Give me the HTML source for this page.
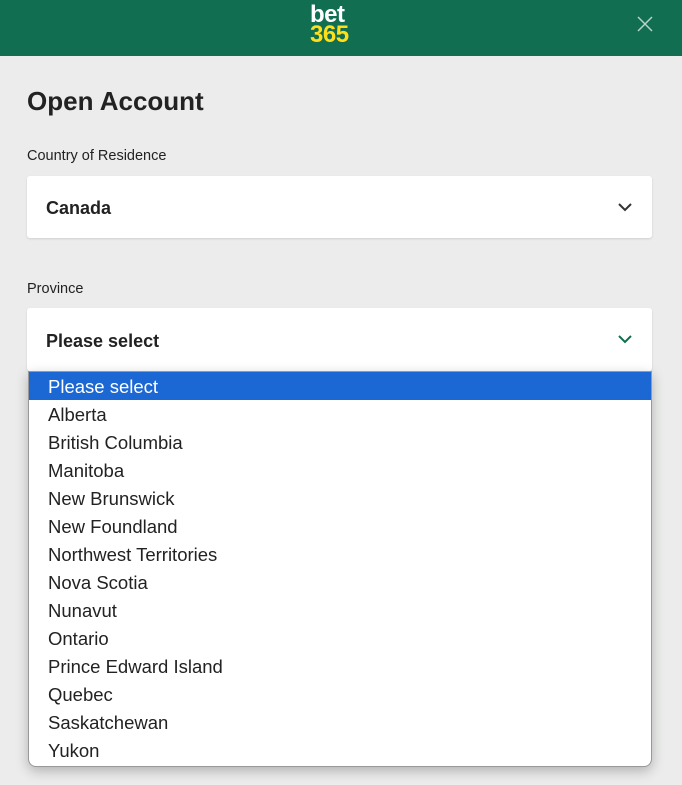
<!DOCTYPE html>
<html><head><style>
body{margin:0;width:682px;height:785px;background:#ebeceb;font-family:"Liberation Sans",sans-serif;position:relative;overflow:hidden}
.hdr{position:absolute;left:0;top:0;width:682px;height:56px;background:#126e51}
.logo{position:absolute;left:310px;top:5px;font-weight:bold;font-size:24px;line-height:20px;letter-spacing:-0.5px}
.t{position:absolute;color:#222}
.box{position:absolute;left:27px;width:625px;background:#fff;border-radius:3px;box-shadow:0 1px 2px rgba(0,0,0,.12)}
.box span{position:absolute;left:19px;font-weight:bold;font-size:18px;color:#222}
.dd{position:absolute;left:28px;top:371px;width:622px;height:394px;background:#fff;border:1px solid #999;border-radius:0 0 8px 8px;box-shadow:0 4px 12px rgba(0,0,0,.25);overflow:hidden}
.dd div{height:28px;line-height:30px;padding-left:19px;font-size:18.5px;color:#222}
.dd .sel{background:#1b67d3;color:#fff}
</style></head><body>
<div class="hdr">
<div class="logo"><div style="color:#fff">bet</div><div style="color:#ffdf1b">365</div></div>
<svg style="position:absolute;left:637px;top:16px" width="16" height="16"><path d="M1 1L15 15M15 1L1 15" stroke="#b6d4c8" stroke-width="1.5"/></svg>
</div>
<div class="t" style="left:27px;top:86px;font-size:26px;font-weight:bold">Open Account</div>
<div class="t" style="left:27px;top:148px;font-size:14.5px">Country of Residence</div>
<div class="box" style="top:176px;height:62px"><span style="top:22px">Canada</span>
<svg style="position:absolute;left:590px;top:25px" width="16" height="12"><path d="M2 3L8 9L14 3" stroke="#333" stroke-width="2" fill="none"/></svg></div>
<div class="t" style="left:27px;top:281px;font-size:14.5px">Province</div>
<div class="box" style="top:308px;height:63px"><span style="top:23px">Please select</span>
<svg style="position:absolute;left:590px;top:25px" width="16" height="12"><path d="M2 3L8 9L14 3" stroke="#126e51" stroke-width="2" fill="none"/></svg></div>
<div class="dd">
<div class="sel">Please select</div><div>Alberta</div><div>British Columbia</div><div>Manitoba</div><div>New Brunswick</div><div>New Foundland</div><div>Northwest Territories</div><div>Nova Scotia</div><div>Nunavut</div><div>Ontario</div><div>Prince Edward Island</div><div>Quebec</div><div>Saskatchewan</div><div>Yukon</div>
</div>
</body></html>
